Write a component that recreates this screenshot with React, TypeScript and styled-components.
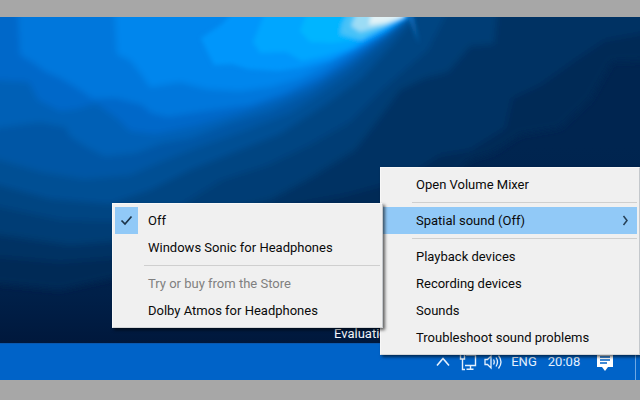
import React from "react";
import styled, { createGlobalStyle } from "styled-components";

const fontStack = `Roboto, "Liberation Sans", sans-serif`;

const GlobalStyle = createGlobalStyle`
  *, *::before, *::after { box-sizing: border-box; }
  body { margin: 0; background: #a7a7a7; font-family: ${fontStack}; }
`;

const Page = styled.main`
  display: flex;
  flex-direction: column;
  min-height: 100vh;
  padding: 17px 0 20px;
  background: #a7a7a7;
`;

const Screen = styled.section`
  position: relative;
  flex: 1;
  display: flex;
  flex-direction: column;
  overflow: hidden;
`;

const Desktop = styled.div`
  position: relative;
  flex: 1;
  display: flex;
  align-items: flex-end;
  justify-content: flex-end;
  overflow: hidden;
  background: #002450;
`;

const WallpaperSvg = styled.svg`
  position: absolute;
  inset: 0;
  width: 100%;
  height: 100%;
`;

const Watermark = styled.p`
  position: relative;
  width: 306px;
  margin: 0;
  color: #f4f7fb;
  font-size: 13px;
  line-height: 18px;
`;

const Taskbar = styled.footer`
  display: flex;
  align-items: center;
  justify-content: flex-end;
  height: 37px;
  background: #0063c8;
  border-top: 1px solid #0a58ae;
  color: #e6f1fd;
`;

const TrayButton = styled.button<{ $width: number }>`
  display: flex;
  align-items: center;
  justify-content: center;
  width: ${(p) => p.$width}px;
  height: 100%;
  padding: 0;
  border: 0;
  background: transparent;
  color: inherit;
  font: 13px/18px ${fontStack};
`;

const ShowDesktop = styled.button`
  width: 5px;
  height: 100%;
  padding: 0;
  border: 0;
  border-left: 1px solid #6ea8e4;
  background: transparent;
`;

const MenuPanel = styled.ul`
  margin: 0;
  padding: 3px 2px;
  list-style: none;
  background: #f0f0f0;
  border: 1px solid #f8f8f8;
  border-right-color: #c4c8cc;
  border-bottom-color: #d4d6d8;
  box-shadow: 2px 2px 3px rgba(0, 0, 0, 0.6);
`;

const ContextMenu = styled(MenuPanel)`
  position: absolute;
  right: 0;
  bottom: 25px;
  width: 260px;
`;

const Submenu = styled(MenuPanel)`
  position: absolute;
  top: -4px;
  right: 100%;
  width: 271px;
`;

const MenuEntry = styled.li`
  position: relative;
`;

const MenuItem = styled.button<{ $active?: boolean }>`
  display: grid;
  grid-template-columns: 23px 1fr auto;
  column-gap: 10px;
  align-items: center;
  width: 100%;
  height: 27px;
  padding: 0;
  border: 0;
  background: ${(p) => (p.$active ? "#91c9f7" : "transparent")};
  color: #0a0a0a;
  font: 13px/18px ${fontStack};
  text-align: left;
  white-space: nowrap;

  &:disabled { color: #808080; }
`;

const CheckSlot = styled.span<{ $checked?: boolean }>`
  display: flex;
  align-items: center;
  justify-content: center;
  height: 27px;
  background: ${(p) => (p.$checked ? "#91c9f7" : "transparent")};
`;

const ArrowSlot = styled.span`
  display: flex;
  padding-right: 8px;
`;

const Separator = styled.li`
  height: 9px;
  padding: 4px 0 4px 29px;

  &::after {
    content: "";
    display: block;
    height: 1px;
    background: #cfcfcf;
  }
`;

type Band = { fill: string; d: string };

const skyBands: Band[] = [
  { fill: "#002a57", d: "M-20 0H660V60L612 62L590 100L560 128L520 135L495 152L470 160L440 190L380 215L300 225L230 245L150 270L60 290L-20 282Z" },
  { fill: "#003363", d: "M-20 0H660V30L605 40L575 60L540 85L512 98L505 128L470 150L440 155L400 180L345 195L290 205L220 232L140 256L60 262L-20 255Z" },
  { fill: "#003c74", d: "M-20 0H497V17L494 44L470 46L460 58L448 72L425 78L400 90L384 112L355 150L310 178L270 200L190 218L130 240L70 245L-20 232Z" },
  { fill: "#004582", d: "M-20 0H445V17L428 50L405 70L382 90L350 122L310 145L268 165L222 180L180 206L122 222L60 220L-20 203Z" },
  { fill: "#004f94", d: "M-20 0H415V17L392 45L362 78L325 105L280 134L240 150L190 170L150 190L110 204L50 199L-20 180Z" },
  { fill: "#0057a5", d: "M-20 0H410V17L385 42L350 73L320 94L290 113L240 132L195 148L162 161L130 175L84 179L42 172L-20 154Z" },
  { fill: "#0060b6", d: "M-20 0H408V17L384 38L350 65L310 92L270 111L230 123L190 138L162 143L135 153L105 156L87 147L70 136L66 127L40 122L-20 130Z" },
  { fill: "#0068c9", d: "M-20 0H408V17L385 35L350 61L318 82L280 99L240 113L195 126L155 134L130 131L118 119L96 103L77 109L60 111L38 100L29 82L-20 79Z" },
  { fill: "#0077dc", d: "M17 0H407V17L386 33L350 56L320 76L285 93L250 105L200 112L168 117L151 113L142 105L115 98L93 99L77 88L60 78L46 72L32 62L20 55Z" },
  { fill: "#0086ed", d: "M114 0H407V17L386 32L350 52L325 65L300 78L270 87L240 91L207 89L180 82L150 87L139 71L130 60L117 54Z" },
];

const glowBands: Band[] = [
  { fill: "#0096fb", d: "M245 0H407V17L386 31L355 48L330 60L300 68L278 71L248 69L232 64L214 65L206 49L201 38L221 25Z" },
  { fill: "#00a6ff", d: "M270 0H407V17L380 32L350 48L325 56L302 61L286 52L260 53L253 42L258 30Z" },
  { fill: "#00b5ff", d: "M312 0H406V17L380 30L356 40L332 43L310 42L300 31Z" },
  { fill: "#47c2f8", d: "M354 0H405V17L382 29L361 40L340 34L342 24Z" },
  { fill: "#9bdcf5", d: "M362 0H404V17L382 26L360 32L351 26Z" },
  { fill: "#e3f3f7", d: "M374 0H404V17L386 23L369 25Z" },
];

const Bands = ({ items }: { items: Band[] }) => (
  <>
    {items.map((b) => (
      <path key={b.fill} d={b.d} fill={b.fill} />
    ))}
  </>
);

function Wallpaper() {
  return (
    <WallpaperSvg viewBox="0 17 640 326" preserveAspectRatio="none" aria-hidden="true">
      <defs>
        <linearGradient id="night" x1="0" y1="0" x2="0" y2="1">
          <stop offset="0.4" stopColor="#002550" />
          <stop offset="0.85" stopColor="#002049" />
          <stop offset="1" stopColor="#00183c" />
        </linearGradient>
        <filter id="sky" x="-5%" y="-5%" width="110%" height="110%">
          <feGaussianBlur stdDeviation="3" />
        </filter>
        <filter id="glow" x="-5%" y="-5%" width="110%" height="110%">
          <feGaussianBlur stdDeviation="2" />
        </filter>
      </defs>
      <rect x="0" y="17" width="640" height="326" fill="url(#night)" />
      <g filter="url(#sky)">
        <Bands items={skyBands} />
      </g>
      <g filter="url(#glow)">
        <Bands items={glowBands} />
        <path d="M408 14L412 14L419 44Z" fill="#1976c8" />
      </g>
    </WallpaperSvg>
  );
}

const CheckIcon = () => (
  <svg width="13" height="12" viewBox="0 0 13 12" fill="none" stroke="#1d3449" strokeWidth="1.7" aria-hidden="true">
    <path d="M1.5 5.5L5 9L11.5 1.5" />
  </svg>
);

const ArrowIcon = () => (
  <svg width="7" height="11" viewBox="0 0 7 11" fill="none" stroke="#263f55" strokeWidth="1.5" aria-hidden="true">
    <path d="M1.5 1L5 5.5L1.5 10" />
  </svg>
);

const ChevronIcon = () => (
  <svg width="14" height="10" viewBox="0 0 14 10" fill="none" stroke="currentColor" strokeWidth="1.6" aria-hidden="true">
    <path d="M1 8.5L7 1.5L13 8.5" />
  </svg>
);

const NetworkIcon = () => (
  <svg width="18" height="18" viewBox="0 0 18 18" fill="none" stroke="currentColor" strokeWidth="1.4" aria-hidden="true">
    <path d="M7 2H16.5V12.5H6M11.5 12.5V16M7.5 16.3H14.5" />
    <path d="M1.5 1V6H5.5V1M3.5 6V16.5H6" />
  </svg>
);

const VolumeIcon = () => (
  <svg width="19" height="18" viewBox="0 0 19 18" fill="none" stroke="currentColor" strokeWidth="1.3" aria-hidden="true">
    <path d="M1 6.5H3.5L7 3V15L3.5 11.5H1Z" />
    <path d="M9.5 6.5Q11 9 9.5 11.5M12 4.5Q15 9 12 13.5M14.5 2.5Q19.5 9 14.5 15.5" />
  </svg>
);

const NotificationIcon = () => (
  <svg width="18" height="20" viewBox="0 0 18 20" aria-hidden="true">
    <path d="M1 1H17V15H12L9 19L6 15H1Z" fill="#fff" />
    <path d="M4 5H14M4 8H14M4 11H11" stroke="#0063c8" strokeWidth="1.4" />
  </svg>
);

type ItemProps = {
  label: string;
  checked?: boolean;
  active?: boolean;
  disabled?: boolean;
  children?: React.ReactNode;
};

function Item({ label, checked, active, disabled, children }: ItemProps) {
  return (
    <MenuEntry role="none">
      <MenuItem
        type="button"
        role={checked !== undefined ? "menuitemradio" : "menuitem"}
        aria-checked={checked}
        aria-haspopup={children ? "menu" : undefined}
        aria-expanded={children ? true : undefined}
        $active={active}
        disabled={disabled}
      >
        <CheckSlot $checked={checked}>{checked && <CheckIcon />}</CheckSlot>
        <span>{label}</span>
        {children && (
          <ArrowSlot>
            <ArrowIcon />
          </ArrowSlot>
        )}
      </MenuItem>
      {children}
    </MenuEntry>
  );
}

export default function App() {
  return (
    <>
      <GlobalStyle />
      <Page>
        <Screen>
          <Desktop>
            <Wallpaper />
            <Watermark>Evaluation copy</Watermark>
          </Desktop>
          <Taskbar>
            <TrayButton type="button" $width={26} aria-label="Show hidden icons"><ChevronIcon /></TrayButton>
            <TrayButton type="button" $width={24} aria-label="Network"><NetworkIcon /></TrayButton>
            <TrayButton type="button" $width={26} aria-label="Volume"><VolumeIcon /></TrayButton>
            <TrayButton type="button" $width={36} aria-label="Input language: ENG">ENG</TrayButton>
            <TrayButton type="button" $width={44} aria-label="Clock: 20:08">20:08</TrayButton>
            <TrayButton type="button" $width={38} aria-label="Notifications"><NotificationIcon /></TrayButton>
            <TrayButton type="button" $width={11} aria-hidden="true" tabIndex={-1} />
            <ShowDesktop type="button" aria-label="Show desktop" />
          </Taskbar>
          <ContextMenu role="menu" aria-label="Sound">
            <Item label="Open Volume Mixer" />
            <Separator role="separator" />
            <Item label="Spatial sound (Off)" active>
              <Submenu role="menu" aria-label="Spatial sound">
                <Item label="Off" checked />
                <Item label="Windows Sonic for Headphones" checked={false} />
                <Separator role="separator" />
                <Item label="Try or buy from the Store" disabled />
                <Item label="Dolby Atmos for Headphones" />
              </Submenu>
            </Item>
            <Separator role="separator" />
            <Item label="Playback devices" />
            <Item label="Recording devices" />
            <Item label="Sounds" />
            <Item label="Troubleshoot sound problems" />
          </ContextMenu>
        </Screen>
      </Page>
    </>
  );
}
